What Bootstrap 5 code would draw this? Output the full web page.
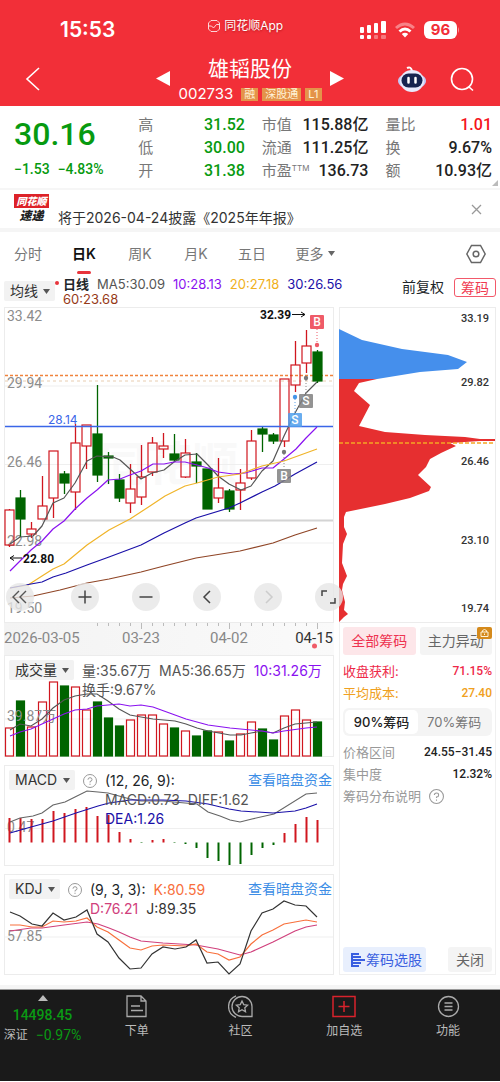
<!DOCTYPE html>
<html lang="zh-CN">
<head>
<meta charset="utf-8">
<meta name="viewport" content="width=device-width, initial-scale=1">
<title>雄韬股份 002733</title>
<link href="https://cdn.jsdelivr.net/npm/bootstrap@5.3.0/dist/css/bootstrap.min.css" rel="stylesheet">
<style>
:root{--up:#d0161f;--down:#006400;--brand:#f22f38;--line:#ececec}
body{font-family:Inter,"Noto Sans CJK SC",sans-serif;font-size:14px;line-height:20px;color:#333;background:#fff}
button{font-family:inherit}
svg{display:block}
.num{font-family:Roboto,"Noto Sans CJK SC",sans-serif;font-weight:500}
.plain{border:0;background:none;padding:0;color:inherit}
.even{flex:1 1 0}
/* header */
.app-head{background:var(--brand);color:#fff;height:106px}
.status-row{height:52px;padding:9px 40px 0 60px}
.clock{font-size:21px;font-weight:600;line-height:42px}
.app-name{font-size:12px;line-height:18px;text-shadow:0 1px 2px #8008;padding-top:8px}
.batt{background:#fff;color:var(--brand);border-radius:6px;width:33px;height:18px;font-size:15px;line-height:18px;font-weight:700;text-align:center}
.title-row{height:54px;padding:0 25px}
.stock-name{font-size:21px;line-height:30px;font-weight:400}
.stock-code{font-size:15px;line-height:20px}
.tag{background:#e4934a;color:#fff3d8;font-size:11px;line-height:13px;padding:0 3px}
/* quote */
.quote{height:82px;padding:7px 8px 0 14px}
.quote-main{flex:0 0 26%;color:#079a10}
.price{font-size:32px;line-height:42px}
.change{font-size:14px;line-height:28px}
.quote-grid{display:grid;grid-template-columns:repeat(3,1fr);column-gap:17px;line-height:23px;align-content:start}
.quote-grid>div{display:flex;justify-content:space-between;font-size:15px;color:#777}
.quote-grid .num{font-size:16px;color:#222}
.quote-grid .dn{color:#079a10}
.quote-grid .upc{color:#f5141c}
.ttm{font-size:8px;line-height:8px;vertical-align:5px}
.fold{right:2px;bottom:2px}
.notice{height:44px;border-top:2px solid #f6f6f6;border-bottom:4px solid #f5f5f5;padding:0 18px 0 14px}
.notice-text{padding:18px 0 0 9px}
.brand-logo{width:35px;font-size:12px;line-height:15px;font-weight:900;font-style:italic;text-align:center;color:#222}
.brand-logo b{display:block;background:#dd2228;color:#fff;font-size:10px;line-height:14px}
/* tabs */
.tabs{height:43px;padding-right:14px}
.tabs .plain{width:56px;height:43px;color:#777;position:relative}
.tabs .active{color:#111;font-weight:600}
.tabs .active::after{content:"";position:absolute;left:21px;bottom:1px;width:14px;height:3px;border-radius:2px;background:#e8343c}
.tabs .more{width:70px}
.tabs .gear{width:20px}
.pick{appearance:none;border:0;border-radius:2px;color:#333;height:20px;padding:0 17px 0 6px;font-size:14px;line-height:20px;width:auto;
background:#f2f2f2 url("data:image/svg+xml,%3Csvg xmlns='http://www.w3.org/2000/svg' width='7' height='5'%3E%3Cpath d='M0 0h7L3.5 5z' fill='%23555'/%3E%3C/svg%3E") no-repeat right 5px center}
.ma-row{height:32px;padding:2px 4px 0}
.ma-text{font-size:13px;line-height:15px;column-gap:8px;width:57%}
.chip-toggle{border:1px solid #f2596a;color:#f03a50;border-radius:3px;font-size:14px;line-height:17px;padding:0 6px}
/* charts */
.board{display:grid;grid-template-columns:330fr 157fr;column-gap:5px;padding:0 4px 10px}
.panel{border:1px solid var(--line);position:relative}
.panel svg.plot{width:100%;height:auto;overflow:visible}
.plot text{font-family:Roboto,"Noto Sans CJK SC",sans-serif}
.axl{font-size:14px;fill:#8c8c8c}
.axis-strip{background:linear-gradient(90deg,#f3f3f3,#fafafa)}
.over{position:absolute;left:4px;right:1px;top:4px}
.info{flex:1;min-width:0;font-size:14px;line-height:19px;column-gap:8px;padding-top:1px}
.ask{color:#3d8ee6}
.tools{position:absolute;left:1px;bottom:11px;z-index:2;gap:33px}
.tools button{width:28px;height:28px;border-radius:50%;border:0;padding:0;background:#e6e6e6cc;flex:none}
.c5{color:#555}.c10{color:#8a12f0}.c20{color:#f0b020}.c30{color:#1a10a8}.c60{color:#963a18}
.ck{color:#f8703c}.cd{color:#d0407c}
/* chips */
.side{border:1px solid #f0f0f0;border-top:0;padding:4px 3px 2px}
.soft{border:0;border-radius:3px;background:#f4f4f4;color:#666;font-size:14px;padding:0;line-height:28px;height:28px;position:relative}
.soft.low{height:25px;line-height:25px}
.soft.pink{background:#fde6e9;color:#ee3350}
.soft.blue{background:#e8effd;color:#3a5fe0}
.lock{position:absolute;right:0;top:0}
.kv{font-size:13px;line-height:22px;color:#999;padding-top:5px}
.kv .num{font-size:12px;color:#222}
.seg{background:#f4f4f4;border-radius:6px;padding:2px;height:28px}
.seg button{border:0;border-radius:5px;font-size:13px;line-height:24px;padding:0;background:none;color:#777}
.seg .on{background:#fff;color:#222;font-weight:500}
.band{height:4px;background:#f5f5f5}
/* footer */
.foot{background:#1a1a1a;color:#bbb;height:92px;font-size:12px;border-top:1px solid #999;padding-top:5px}
.foot a{color:#bbb;text-decoration:none;line-height:18px}
.foot-index{flex:0 0 17%}
.foot .num{color:#0a9a14;font-weight:400;font-size:14px}
</style>
</head>
<body>
<header class="app-head">
  <div class="status-row d-flex justify-content-between align-items-start">
    <div class="clock">15:53</div>
    <div class="app-name d-flex align-items-center gap-1 ps-3">
      <svg width="12" height="12" viewBox="0 0 12 12" fill="none" stroke="#fff" stroke-width=".8"><path d="M3 .5h6L11.500 3v6L9 11.500H3L.5 9V3z"/><path d="M.5 6h3l2 2 3-3.500h3"/></svg>同花顺App
    </div>
    <div class="d-flex align-items-center pt-2 mt-1" style="gap:9px">
      <svg width="26" height="18" viewBox="0 0 26 18" fill="#fff"><rect y="6" width="4" height="6" rx="1"/><rect x="7" y="4" width="4" height="8" rx="1"/><rect x="14" y="2" width="4" height="10" rx="1"/><rect x="21" width="5" height="12" rx="1"/><rect y="14" width="4" height="4" rx="1"/><rect x="7" y="14" width="4" height="4" rx="1"/><g opacity=".35"><rect x="14" y="14" width="4" height="4" rx="1"/><rect x="21" y="14" width="5" height="4" rx="1"/></g></svg>
      <svg width="20" height="16" viewBox="0 0 20 16" fill="none" stroke="#fff" stroke-width="3"><path d="M1 6Q10-2 19 6" opacity=".4"/><path d="M4.500 9.500Q10 4.500 15.500 9.500"/><path d="M10 15.500 6.800 12Q10 9.500 13.200 12z" fill="#fff" stroke="none"/></svg>
      <div class="d-flex align-items-center"><div class="batt">96</div><svg width="3" height="6"><path d="M1 0q2 3 0 6z" fill="#fff" opacity=".5"/></svg></div>
    </div>
  </div>
  <div class="title-row d-flex">
    <div class="even d-flex align-items-center"><button class="plain" aria-label="返回"><svg width="15" height="26" viewBox="0 0 15 26" fill="none" stroke="#fff" stroke-width="1.600"><path d="M14 2 2 13l12 11"/></svg></button></div>
    <div class="d-flex align-items-center gap-2">
      <button class="plain" aria-label="上一只"><svg width="14" height="16"><path d="M14 0v15L0 7.500z" fill="#fff"/></svg></button>
      <div class="text-center">
        <h1 class="stock-name m-0">雄韬股份</h1>
        <div class="d-flex align-items-center gap-1"><span class="stock-code me-1">002733</span><span class="tag">融</span><span class="tag">深股通</span><span class="tag">L1</span></div>
      </div>
      <button class="plain" aria-label="下一只"><svg width="14" height="16"><path d="M0 0v15l14-7.500z" fill="#fff"/></svg></button>
    </div>
    <div class="even d-flex align-items-center justify-content-end gap-4">
      <button class="plain" aria-label="助手"><svg width="28" height="28" viewBox="0 0 28 28"><path d="M9 3q4-2 5 3" fill="none" stroke="#fff" stroke-width="2"/><ellipse cx="14" cy="16" rx="14" ry="8" fill="#c4c8f5"/><ellipse cx="14" cy="16" rx="12" ry="11" fill="#e8eafc"/><rect x="3.500" y="8.500" width="21" height="14" rx="7" fill="#16234f"/><path d="M10.500 13v4.500M17.500 13v4.500" stroke="#fff" stroke-width="2.500" stroke-linecap="round"/></svg></button>
      <button class="plain" aria-label="搜索"><svg width="25" height="25" viewBox="0 0 25 25" fill="none" stroke="#fff" stroke-width="1.600"><circle cx="12" cy="12" r="10.500"/><path d="m19 20 4 3.500"/></svg></button>
    </div>
  </div>
</header>

<section class="quote d-flex position-relative">
  <div class="quote-main"><div class="price num">30.16</div><div class="change num d-flex gap-2"><span>−1.53</span><span>−4.83%</span></div></div>
  <div class="quote-grid flex-fill">
    <div>高<span class="num dn">31.52</span></div><div>市值<span class="num">115.88亿</span></div><div>量比<span class="num upc">1.01</span></div>
    <div>低<span class="num dn">30.00</span></div><div>流通<span class="num">111.25亿</span></div><div>换<span class="num">9.67%</span></div>
    <div>开<span class="num dn">31.38</span></div><div><span>市盈<span class="ttm">TTM</span></span><span class="num">136.73</span></div><div>额<span class="num">10.93亿</span></div>
  </div>
  <svg class="fold position-absolute" width="6" height="6"><path d="M6 0v6H0z" fill="#bbb"/></svg>
</section>

<section class="notice d-flex">
  <div class="brand-logo pt-1"><b>同花顺</b>速递</div>
  <div class="notice-text flex-fill text-nowrap">将于2026-04-24披露《2025年年报》</div>
  <button class="plain" aria-label="关闭公告"><svg width="11" height="11" stroke="#999" stroke-width="1.300"><path d="m1 1 9 9m0-9-9 9"/></svg></button>
</section>

<nav class="tabs d-flex align-items-center">
  <button class="plain">分时</button><button class="plain active">日K</button><button class="plain">周K</button><button class="plain">月K</button><button class="plain">五日</button>
  <button class="plain more d-flex align-items-center justify-content-center gap-1">更多<svg width="7" height="5"><path d="M0 0h7L3.500 5z" fill="#666"/></svg></button>
  <button class="plain gear ms-auto" aria-label="设置"><svg width="20" height="20" viewBox="0 0 20 20" fill="none" stroke="#666" stroke-width="1.500"><path d="M5.500 1.500h9l4.700 8.500-4.700 8.500h-9L.8 10z"/><circle cx="10" cy="10" r="2.800"/></svg></button>
</nav>

<div class="ma-row d-flex align-items-start">
  <select class="pick mt-1" aria-label="主图指标"><option>均线</option></select>
  <svg class="mt-1 me-1" width="4" height="4"><circle cx="2" cy="2" r="2" fill="#e8343c"/></svg>
  <div class="ma-text d-flex flex-wrap"><b class="fw-semibold text-dark">日线</b><span class="c5">MA5:30.09</span><span class="c10">10:28.13</span><span class="c20">20:27.18</span><span class="c30">30:26.56</span><span class="c60">60:23.68</span></div>
  <div class="ms-auto d-flex align-items-center text-nowrap" style="gap:10px"><button class="plain text-dark">前复权</button><button class="chip-toggle bg-white">筹码</button></div>
</div>

<main class="board">
  <div>
    <div class="panel">
      <svg class="plot" viewBox="5 308 328 314">
        <text x="100" y="480" font-size="46" font-weight="700" fill="#f9f9f9">同花顺</text>
        <path d="M5 386H333M5 464.500H333M5 543H333" stroke="#efefef"/>
        <path d="M42 520.500H333" stroke="#d4d4d4" stroke-width="2"/>
        <path d="M5 381H333" stroke="#e8cdb0" stroke-dasharray="3 3"/>
        <path d="M5 375.500H333" stroke="#f0833c" stroke-width="1.300" stroke-dasharray="3 2"/>
        <g class="axl"><text x="7" y="321">33.42</text><text x="7" y="388">29.94</text><text x="7" y="467">26.46</text><text x="7" y="546">22.98</text><text x="7" y="613">19.50</text></g>
        <g id="candles"></g>
        <path d="M5 426.500H333" stroke="#3a66e8" stroke-width="1.300"/>
        <text x="48" y="424" font-size="12" fill="#3a66e8" style="font-family:Inter">28.14</text>
        <g fill="none" stroke-width="1.200" stroke-linejoin="round">
          <polyline stroke="#555" points="10,544 20,537 33,536 42,526 53,503 64,498 75,483 87,461 97,456 113,457 120,460 130,469 141,479 152,473 164,470 174,462 185,455 197,454 208,465 218,476 229,484 241,490 251,486 262,471 273,461 284,436 295,413 306,393 317,382"/>
          <polyline stroke="#8a12f0" points="10,571 31,550 42,541 53,529 64,521 75,509 87,498 97,490 108,480 120,479 130,475 141,471 153,464 164,464 174,462 185,462 197,465 208,468 218,472 233,474 245,473 262,468 273,468 284,459 296,449 306,438 317,427"/>
          <polyline stroke="#f0b429" points="10,588 28,585 42,576 53,569 64,564 87,545 109,530 130,519 150,506 165,496 185,486 197,483 218,477 240,474 262,466 284,461 317,449"/>
          <polyline stroke="#1a10a8" points="10,588 31,584 42,582 53,577 66,573 87,565 109,557 141,545 164,533 185,523 196,518 229,508 240,503 262,492 275,486 295,474 317,462"/>
          <polyline stroke="#8f4526" points="10,598 33,596 60,590 87,583 109,579 141,572 164,566 196,558 240,551 273,543 295,535 317,528"/>
        </g>
        <g fill="none" stroke="#111"><path d="M292 314.500h13m-4-2.500 4 2.500-4 2.500M22 558H10m4-2.500-4 2.500 4 2.500"/></g>
        <g font-size="12" font-weight="700" fill="#111"><text x="260" y="319">32.39</text><text x="23" y="563">22.80</text></g>
        <g fill="none" stroke-dasharray="1 2"><path d="M317 329v14" stroke="#ef5b68"/><path d="M306 380v14M284 454v14" stroke="#888"/><path d="M295 399v14" stroke="#5aa2ea"/></g>
        <g><circle cx="317" cy="345" r="2.200" fill="#ef5b68"/><circle cx="306" cy="378" r="2.200" fill="#777"/><circle cx="284" cy="452" r="2.200" fill="#777"/><circle cx="295" cy="397" r="2.200" fill="#4596e8"/></g>
        <rect x="310" y="315" width="14" height="14" rx="1" fill="#ef5b68"/><rect x="299" y="394" width="14" height="14" rx="1" fill="#808080d9"/><rect x="288" y="413" width="14" height="14" rx="1" fill="#4f9fecd9"/><rect x="277" y="469" width="14" height="14" rx="1" fill="#808080d9"/>
        <g fill="#fff" font-size="12" font-weight="500" text-anchor="middle"><text x="317" y="326">B</text><text x="306" y="405">S</text><text x="295" y="424">S</text><text x="284" y="480">B</text></g>
      </svg>
      <div class="tools d-flex">
        <button class="me-1" aria-label="最左"><svg width="28" height="28" fill="none" stroke="#555" stroke-width="1.400"><path d="m13 8-6 6 6 6m7-12-6 6 6 6"/></svg></button>
        <button aria-label="放大"><svg width="28" height="28" fill="none" stroke="#444" stroke-width="1.500"><path d="M7.500 14h13M14 7.500v13"/></svg></button>
        <button aria-label="缩小"><svg width="28" height="28" fill="none" stroke="#444" stroke-width="1.500"><path d="M7.500 14h13"/></svg></button>
        <button aria-label="左移"><svg width="28" height="28" fill="none" stroke="#444" stroke-width="1.500"><path d="m17 8-6 6 6 6"/></svg></button>
        <button aria-label="右移"><svg width="28" height="28" fill="none" stroke="#ccc" stroke-width="1.500"><path d="m12 8 6 6-6 6"/></svg></button>
        <button aria-label="全屏"><svg width="28" height="28" fill="none" stroke="#444" stroke-width="1.500"><path d="M7 13V8h5M15 20h5v-5"/></svg></button>
      </div>
    </div>
    <div class="axis-strip">
      <svg class="plot w-100 h-auto" viewBox="4 623 330 32">
        <g id="ticks" stroke="#bbb"></g>
        <g font-size="15" fill="#888"><text x="4" y="643">2026-03-05</text><text x="122" y="643">03-23</text><text x="210" y="643">04-02</text><text x="333" y="643" text-anchor="end" fill="#333">04-15</text></g>
        <circle cx="314.500" cy="646" r="2.500" fill="#ef5b68"/>
      </svg>
    </div>
    <div class="panel mb-2">
      <svg class="plot" viewBox="5 656 328 100">
        <path d="M5 719H333" stroke="#efefef"/>
        <g id="volume"></g>
        <text class="axl" x="7" y="721">39.87万</text>
        <g fill="none" stroke-width="1.100">
          <polyline stroke="#555" points="10,730 20,724 31,726 42,719 53,708 64,700 75,696 87,694 97,694 108,701 119,709 130,715 141,717 153,719 164,720 175,721 186,724 197,728 208,731 219,733 230,735 241,735 251,733 262,731 273,733 284,728 295,724 306,723 317,722"/>
          <polyline stroke="#8a12f0" points="10,736 20,732 31,729 42,724 53,719 64,714 75,710 87,709 97,706 108,705 119,704 130,706 141,705 153,707 164,711 175,715 186,719 197,722 208,725 230,728 251,730 262,731 273,733 284,731 306,728 317,727"/>
        </g>
      </svg>
      <div class="over d-flex align-items-start text-nowrap">
        <select class="pick" aria-label="副图指标一"><option>成交量</option></select>
        <div class="info d-flex flex-wrap ps-2 c5"><span>量:35.67万</span><span>MA5:36.65万</span><span class="c10">10:31.26万</span><span>换手:9.67%</span></div>
      </div>
    </div>
    <div class="panel mb-2">
      <svg class="plot" viewBox="5 766 328 99">
        <path d="M5 828.500H333" stroke="#efefef"/>
        <text class="axl" x="7" y="832">0.47</text>
        <g id="macd" stroke-width="2"></g>
        <g fill="none" stroke-width="1.100">
          <polyline stroke="#666" points="10,822 20,818 33,816 42,813 53,805 65,802 75,797 87,791 98,792 108,793 119,796 130,799 141,801 163,801 185,803 197,804 208,812 220,816 230,820 240,822 252,819 274,814 306,794 317,793"/>
          <polyline stroke="#1a10a8" points="10,833 31,827 53,821 76,813 98,806 109,803 130,800 163,800 186,801 208,804 229,809 241,811 273,813 295,811 306,808 317,804"/>
        </g>
      </svg>
      <div class="over d-flex align-items-start text-nowrap">
        <select class="pick" aria-label="副图指标二"><option>MACD</option></select>
        <button class="plain px-2 mt-1" aria-label="MACD说明"><svg width="14" height="14" viewBox="0 0 14 14" fill="none" stroke="#999"><circle cx="7" cy="7" r="6.500"/><path d="M5 5.700q0-2 2-2t2 1.800-2 2v1M7 9.700v1.200"/></svg></button>
        <div class="info"><div class="text-dark">(12, 26, 9):</div><div class="d-flex c5 gap-2"><span>MACD:0.73</span><span>DIFF:1.62</span></div><div class="c30">DEA:1.26</div></div>
        <a class="ask text-decoration-none" href="#">查看暗盘资金</a>
      </div>
    </div>
    <div class="panel">
      <svg class="plot" viewBox="5 875 328 99">
        <path d="M5 937H333" stroke="#efefef"/>
        <text class="axl" x="7" y="941">57.85</text>
        <g fill="none" stroke-width="1.200">
          <polyline stroke="#d0407c" points="10,931 31,928 42,928 64,925 87,922 98,924 109,928 119,932 130,937 141,941 163,943 196,945 218,949 240,955 251,952 273,942 295,931 306,927 317,925"/>
          <polyline stroke="#f8703c" points="10,925 20,925 32,927 42,927 53,921 64,922 76,921 87,918 97,927 108,932 119,940 130,948 141,950 152,946 163,945 186,946 196,944 207,952 218,954 229,960 240,957 251,944 262,935 273,930 284,924 295,922 306,920 317,922"/>
          <polyline stroke="#333" points="10,912 20,916 32,924 42,926 53,913 64,920 76,917 87,910 97,934 108,942 119,958 130,969 141,968 152,954 163,947 175,949 186,947 196,940 207,963 218,962 229,974 240,964 251,931 262,913 273,909 284,901 295,905 306,906 317,917"/>
        </g>
      </svg>
      <div class="over d-flex align-items-start text-nowrap">
        <select class="pick" aria-label="副图指标三"><option>KDJ</option></select>
        <button class="plain px-2 mt-1" aria-label="KDJ说明"><svg width="14" height="14" viewBox="0 0 14 14" fill="none" stroke="#999"><circle cx="7" cy="7" r="6.500"/><path d="M5 5.700q0-2 2-2t2 1.800-2 2v1M7 9.700v1.200"/></svg></button>
        <div class="info"><div class="d-flex gap-2"><span class="text-dark">(9, 3, 3):</span><span class="ck">K:80.59</span></div><div class="d-flex gap-2"><span class="cd">D:76.21</span><span>J:89.35</span></div></div>
        <a class="ask text-decoration-none" href="#">查看暗盘资金</a>
      </div>
    </div>
  </div>

  <div class="d-flex flex-column">
    <div class="panel">
      <svg class="plot" viewBox="340 308 155 314">
        <path fill="#458fec" d="M339 329 362 340 402 349 448 355 467 362 458 369 420 372 377 379H339z"/>
        <path fill="#e62f30" d="M339 379H377L359 383 354 391 370 405 359 426 385 432 425 435 465 437 480 439H495V441H480L465 442 450 443 456 446 441 453 430 459 426 467 418 475 431 487 429 491 410 498 385 504 346 512 344 517V527L347 534 343 544 342 563 347 576 343 584 342 590 345 602 344 610 348 614 344 617 339 622z"/>
        <path d="M339 443H495" stroke="#f5a623" stroke-width="1.300" stroke-dasharray="4 2"/>
        <g font-size="11" font-weight="500" fill="#333" text-anchor="end"><text x="489" y="322">33.19</text><text x="489" y="386">29.82</text><text x="489" y="465">26.46</text><text x="489" y="544">23.10</text><text x="489" y="612">19.74</text></g>
      </svg>
    </div>
    <div class="side flex-fill d-flex flex-column">
      <div class="d-flex gap-1">
        <button class="soft pink flex-fill">全部筹码</button>
        <button class="soft flex-fill">主力异动<svg class="lock" width="15" height="12" viewBox="0 0 15 12"><rect width="15" height="12" rx="2" fill="#d58a1c"/><path d="M4 5h7v4.500H4zM5.500 5V3.500q2-2 4 0V5M7.500 6.500v1.500" fill="none" stroke="#fff3d8"/></svg></button>
      </div>
      <div class="kv mb-1">
        <div class="d-flex justify-content-between" style="color:#ee2848">收盘获利:<span class="num text-reset">71.15%</span></div>
        <div class="d-flex justify-content-between" style="color:#f0a020">平均成本:<span class="num text-reset">27.40</span></div>
      </div>
      <div class="seg d-flex"><button class="on flex-fill">90%筹码</button><button class="flex-fill">70%筹码</button></div>
      <div class="kv">
        <div class="d-flex justify-content-between">价格区间<span class="num">24.55−31.45</span></div>
        <div class="d-flex justify-content-between">集中度<span class="num">12.32%</span></div>
        <div class="d-flex align-items-center gap-2">筹码分布说明<svg width="15" height="15" viewBox="0 0 14 14" fill="none" stroke="#999"><circle cx="7" cy="7" r="6.500"/><path d="M5 5.700q0-2 2-2t2 1.800-2 2v1M7 9.700v1.200"/></svg></div>
      </div>
      <div class="mt-auto d-flex justify-content-between">
        <button class="soft low blue d-flex align-items-center px-1"><svg class="ms-1" width="15" height="14" fill="none" stroke="#3a5fe0" stroke-width="2"><path d="M1 1h7M1 4h9M1 7h13M1 10h9M1 13h7M1 0v14"/></svg>筹码选股</button>
        <button class="soft low px-1"><span class="px-1">关闭</span></button>
      </div>
    </div>
  </div>
</main>
<div class="band"></div>

<footer class="foot d-flex">
  <div class="foot-index text-center">
    <svg class="mx-auto" width="10" height="6"><path d="M5 0 10 6H0z" fill="#bbb"/></svg>
    <div class="num fw-medium mt-1">14498.45</div>
    <div class="d-flex justify-content-center gap-2 text-nowrap"><span>深证</span><span class="num">−0.97%</span></div>
  </div>
  <a class="even text-center" href="#"><svg class="mx-auto mb-1" width="22" height="23" viewBox="0 0 22 23" fill="none" stroke="#aaa" stroke-width="1.300"><path d="M1 1h14l5 5v15.500H1zM15 1v5h5M5 11h9M5 15.500h12"/></svg>下单</a>
  <a class="even text-center" href="#"><svg class="mx-auto mb-1" width="25" height="23" viewBox="0 0 25 23" fill="none" stroke="#aaa" stroke-width="1.300"><path d="M14 1.500a10 10 0 0 1 10 10v10H14a10 10 0 0 1 0-20zM8 .8a11.500 11.500 0 0 0 0 21.500"/><path d="m14 6 1.700 3.600 3.900.5-2.800 2.700.7 3.900-3.500-1.900-3.500 1.900.7-3.900-2.800-2.700 3.900-.5z"/></svg>社区</a>
  <a class="even text-center" href="#"><svg class="mx-auto mb-1" width="24" height="23" viewBox="0 0 24 23" fill="none" stroke="#d8232c" stroke-width="1.500"><rect x="1" y="1.500" width="22" height="20"/><path d="M6.500 11.500h11M12 6v11"/></svg>加自选</a>
  <a class="even text-center" href="#"><svg class="mx-auto mb-1" width="23" height="23" viewBox="0 0 23 23" fill="none" stroke="#aaa" stroke-width="1.300"><circle cx="11.500" cy="11.500" r="10"/><path d="M7.500 8h8M7.500 11.500h8M7.500 15h8"/></svg>功能</a>
</footer>

<script src="https://cdn.jsdelivr.net/npm/bootstrap@5.3.0/dist/js/bootstrap.bundle.min.js"></script>
<script>
const UP = '#d0161f', DOWN = '#006400', cx = i => 9.5 + 11 * i;
// [rising, high, body top, body bottom, low] on the price plot's own scale
const days = [[1,509,510,545,547],[0,490,498,519,537],[1,522,529,534,538],[1,476,506,519,519],[1,451,451,498,518],[0,471,474,483,494],[1,424,443,492,510],[1,425,425,446,469],[0,385,434,475,482],[0,452,456,458,484],[0,474,480,498,502],[1,464,489,503,513],[1,445,477,497,505],[1,437,443,472,476],[1,433,446,449,458],[0,434,454,460,462],[1,439,453,477,478],[0,453,462,466,483],[0,469,469,509,509],[1,458,488,498,503],[0,489,491,509,512],[1,469,483,490,510],[1,430,441,478,480],[0,427,429,434,452],[0,433,435,441,444],[1,379,379,441,447],[1,341,365,385,392],[1,330,346,363,373],[0,350,352,381,383]];
document.getElementById('candles').innerHTML = days.map(([up, h, t, b, l], i) => {
  const x = cx(i), c = up ? UP : DOWN;
  return `<path d="M${x} ${h}V${t}M${x} ${b}V${l}" stroke="${c}" stroke-width="1.3"/><rect x="${x - 4.5}" y="${t}" width="9" height="${b - t}" stroke="${c}" stroke-width="1.2" fill="${up ? 'none' : c}"/>`;
}).join('');
const vol = [728,701,727,702,682,686,687,710,702,718,726,720,715,715,724,728,731,736,731,732,741,734,722,729,740,716,710,720,722];
const volDown = [1,5,8,9,10,15,17,18,20,23,24,28];
document.getElementById('volume').innerHTML = vol.map((y, i) => {
  const d = volDown.includes(i);
  return `<rect x="${cx(i) - 4}" y="${y}" width="8" height="${756 - y}" stroke="${d ? DOWN : UP}" stroke-width="1.2" fill="${d ? DOWN : 'none'}"/>`;
}).join('');
const hist = [818,818,819,819,811,813,809,807,816,815,832,839,842,840,839,842,844,848,858,861,865,864,855,848,845,833,824,817,820];
document.getElementById('macd').innerHTML = hist.map((y, i) => `<path d="M${cx(i)} 842.5V${y}" stroke="${y > 841 ? DOWN : UP}"/>`).join('');
document.getElementById('ticks').innerHTML = days.map((_, i) => i < 8 ? '' : `<path d="M${cx(i)} 623v${[12,20,28].includes(i) ? 6 : 3}"/>`).join('');
</script>
</body>
</html>
